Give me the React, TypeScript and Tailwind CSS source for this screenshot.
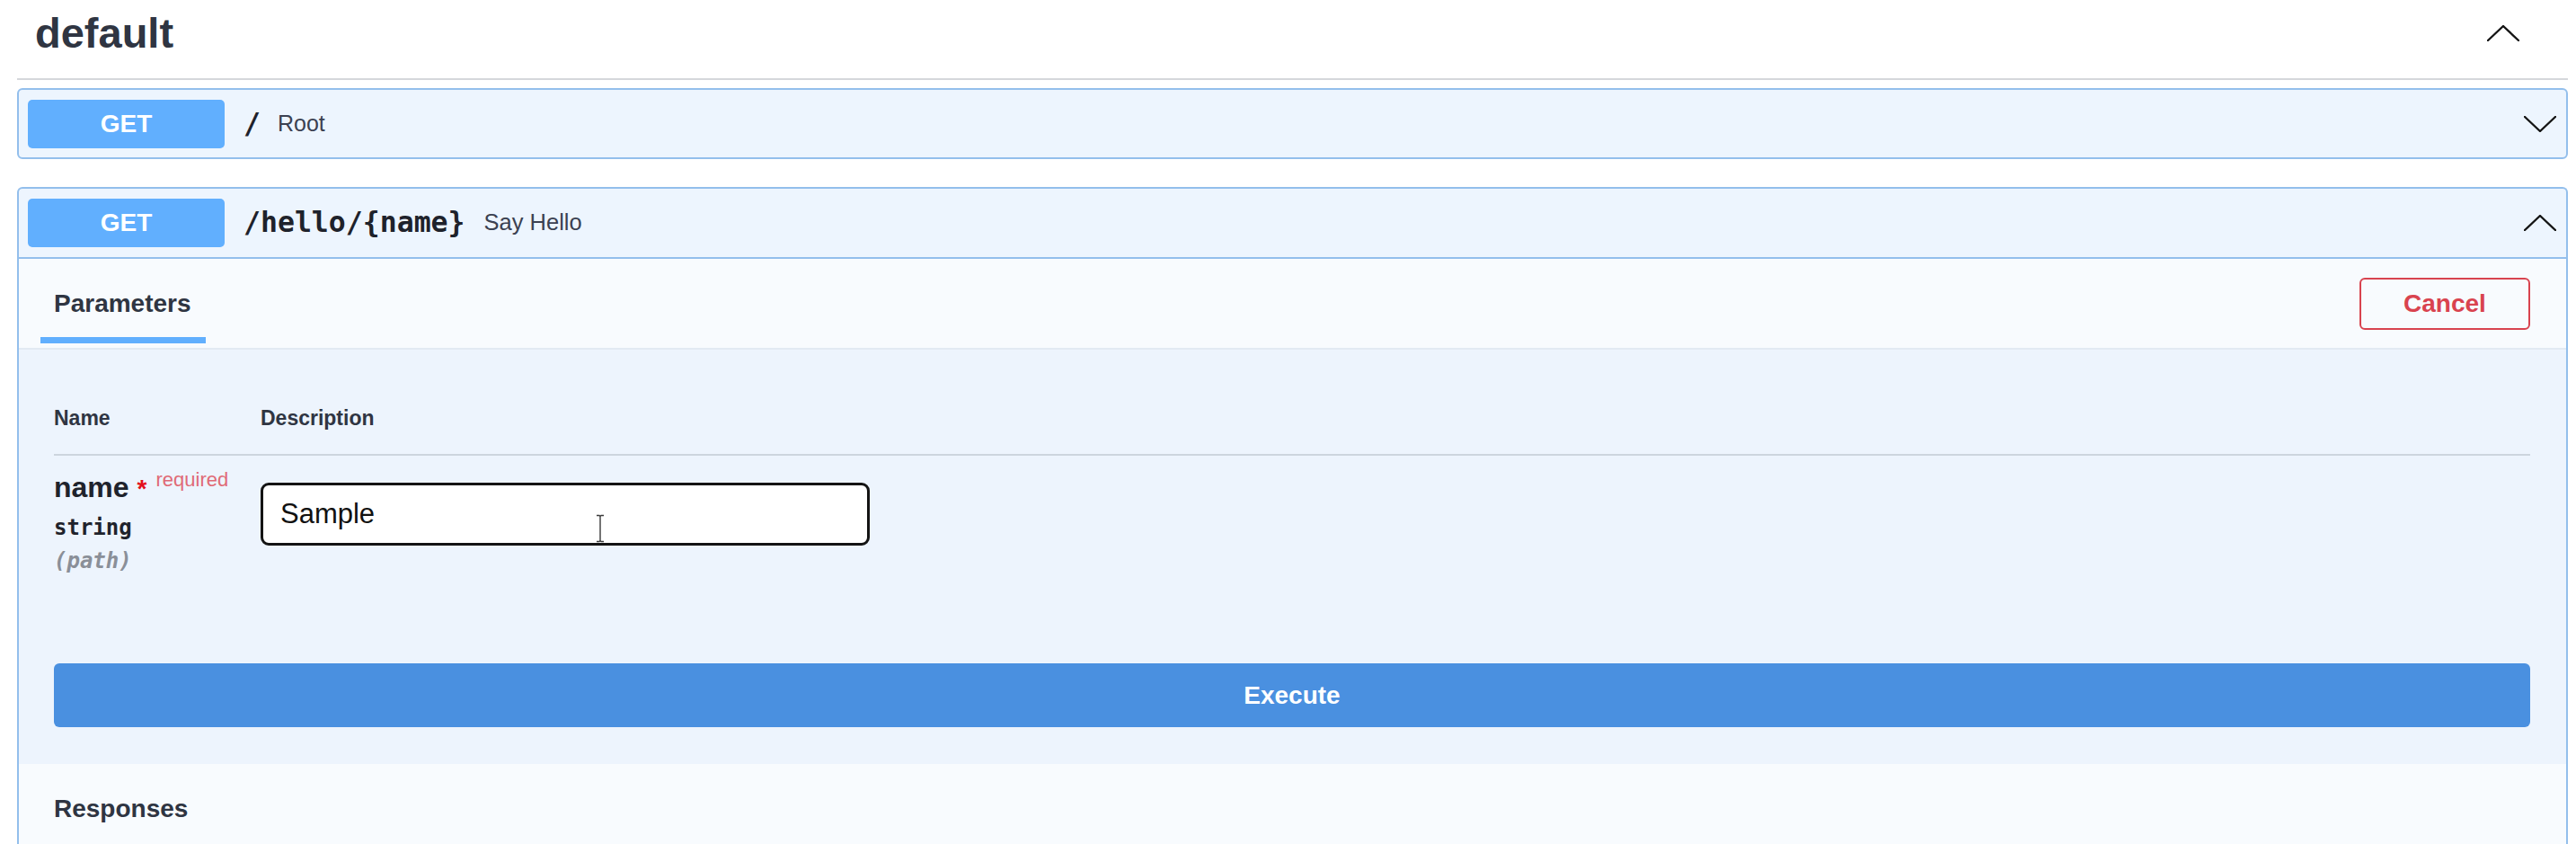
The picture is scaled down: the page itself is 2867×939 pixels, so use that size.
import React from "react";

const Chevron = ({ up }: { up?: boolean }) => (
  <svg width="36" height="18" viewBox="0 0 36 18" fill="none" className="block">
    <polyline
      points={up ? "1,17 18,1 35,17" : "1,1 18,17 35,1"}
      stroke="#141414"
      strokeWidth="2.4"
      strokeLinecap="round"
      strokeLinejoin="round"
    />
  </svg>
);

const Badge = () => (
  <div className="w-[219px] h-[54px] shrink-0 rounded-[5px] bg-[#61affe] flex items-center justify-center text-white font-bold text-[28px] leading-none">
    GET
  </div>
);

export default function App() {
  return (
    <div className="w-[2867px] h-[939px] overflow-hidden bg-white text-[#3b4151] font-['Liberation_Sans',Arial,sans-serif]">
      <div className="ml-[19px] mr-[9px]">
        {/* Tag title */}
        <div className="h-[89px] pb-[14px] border-b-2 border-[#d5d7db] flex items-center justify-between pl-[20px] pr-[54px]">
          <h3 className="text-[47px] font-bold leading-none text-[#2f3542]">default</h3>
          <Chevron up />
        </div>

        {/* GET / */}
        <div className="mt-[9px] border-2 border-[#93bfec] rounded-[6px] bg-[#edf5fe]">
          <div className="h-[75px] flex items-center pl-[10px] pr-[11px]">
            <Badge />
            <span className="ml-[21px] font-['DejaVu_Sans_Mono',monospace] font-bold text-[31.5px] leading-none text-[#1e222b]">
              /
            </span>
            <span className="ml-[19px] text-[25px] leading-none text-[#3b4151]">Root</span>
            <div className="flex-1" />
            <Chevron />
          </div>
        </div>

        {/* GET /hello/{name} */}
        <div className="mt-[31px] border-x-2 border-t-2 border-[#93bfec] rounded-t-[6px] bg-[#edf5fe]">
          <div className="h-[78px] border-b-2 border-[#93bfec] flex items-center pl-[10px] pr-[11px]">
            <Badge />
            <span className="ml-[21px] font-['DejaVu_Sans_Mono',monospace] font-bold text-[31.5px] leading-none text-[#1e222b]">
              /hello/&#123;name&#125;
            </span>
            <span className="ml-[21px] text-[25.5px] leading-none text-[#3b4151]">Say Hello</span>
            <div className="flex-1" />
            <Chevron up />
          </div>

          {/* Section header */}
          <div className="h-[101px] bg-[#f8fbfe] border-b-2 border-[#e2eaf3] flex items-center justify-between pl-[24px] pr-[40px]">
            <div className="self-end mb-[5px] pl-[15px] pr-[16px] pb-[22px] border-b-[7px] border-[#61affe] text-[28px] leading-[31px] font-bold text-[#2f3542]">
              Parameters
            </div>
            <button className="w-[190px] h-[58px] border-2 border-[#d8434f] rounded-[6px] text-[#d9434f] font-bold text-[28px] leading-none bg-transparent">
              Cancel
            </button>
          </div>

          {/* Parameters table */}
          <div className="bg-[#edf4fd] pl-[39px] pr-[40px] pt-[63px] pb-[41px]">
            <div className="grid grid-cols-[230px_1fr] pb-[27px] border-b-2 border-[#cdd5de] text-[23px] leading-[26px] font-bold text-[#2f3542]">
              <div>Name</div>
              <div>Description</div>
            </div>
            <div className="grid grid-cols-[230px_1fr] h-[231px] items-start">
              <div className="pt-[17px]">
                <div className="text-[32px] leading-[36px] font-bold text-[#1f232c] whitespace-nowrap">
                  name
                  <span className="ml-[9px] text-[28px] leading-none text-[#e3101c]">*</span>
                  <span className="relative -top-[12px] ml-[10px] text-[22px] leading-none font-normal text-[#e06a75]">
                    required
                  </span>
                </div>
                <div className="mt-[13px] font-['DejaVu_Sans_Mono',monospace] font-bold text-[24px] leading-[28px] text-[#1f232c]">
                  string
                </div>
                <div className="mt-[9px] font-['DejaVu_Sans_Mono',monospace] font-bold italic text-[24px] leading-[28px] text-[#8a8f98]">
                  (path)
                </div>
              </div>
              <div className="pt-[30px]">
                <div className="relative w-[678px] h-[70px] border-[3px] border-[#141414] rounded-[9px] bg-white flex items-center px-[19px] text-[31px] text-[#111]">
                  Sample
                  <svg
                    className="absolute left-[370px] top-[32px]"
                    width="10"
                    height="32"
                    viewBox="0 0 10 32"
                    fill="none"
                  >
                    <path d="M1 1.5h3l1 1 1-1h3M5 2.5v27M1 30.5h3l1-1 1 1h3" stroke="#3a3a3a" strokeWidth="1.4" />
                  </svg>
                </div>
              </div>
            </div>
            <button className="w-full h-[71px] rounded-[6px] bg-[#4a90e0] text-white font-bold text-[28px] leading-none">
              Execute
            </button>
          </div>

          {/* Responses */}
          <div className="h-[300px] bg-[#f8fbfe] pl-[39px] pt-[34px]">
            <div className="text-[28px] leading-[31px] font-bold text-[#2f3542]">Responses</div>
          </div>
        </div>
      </div>
    </div>
  );
}
